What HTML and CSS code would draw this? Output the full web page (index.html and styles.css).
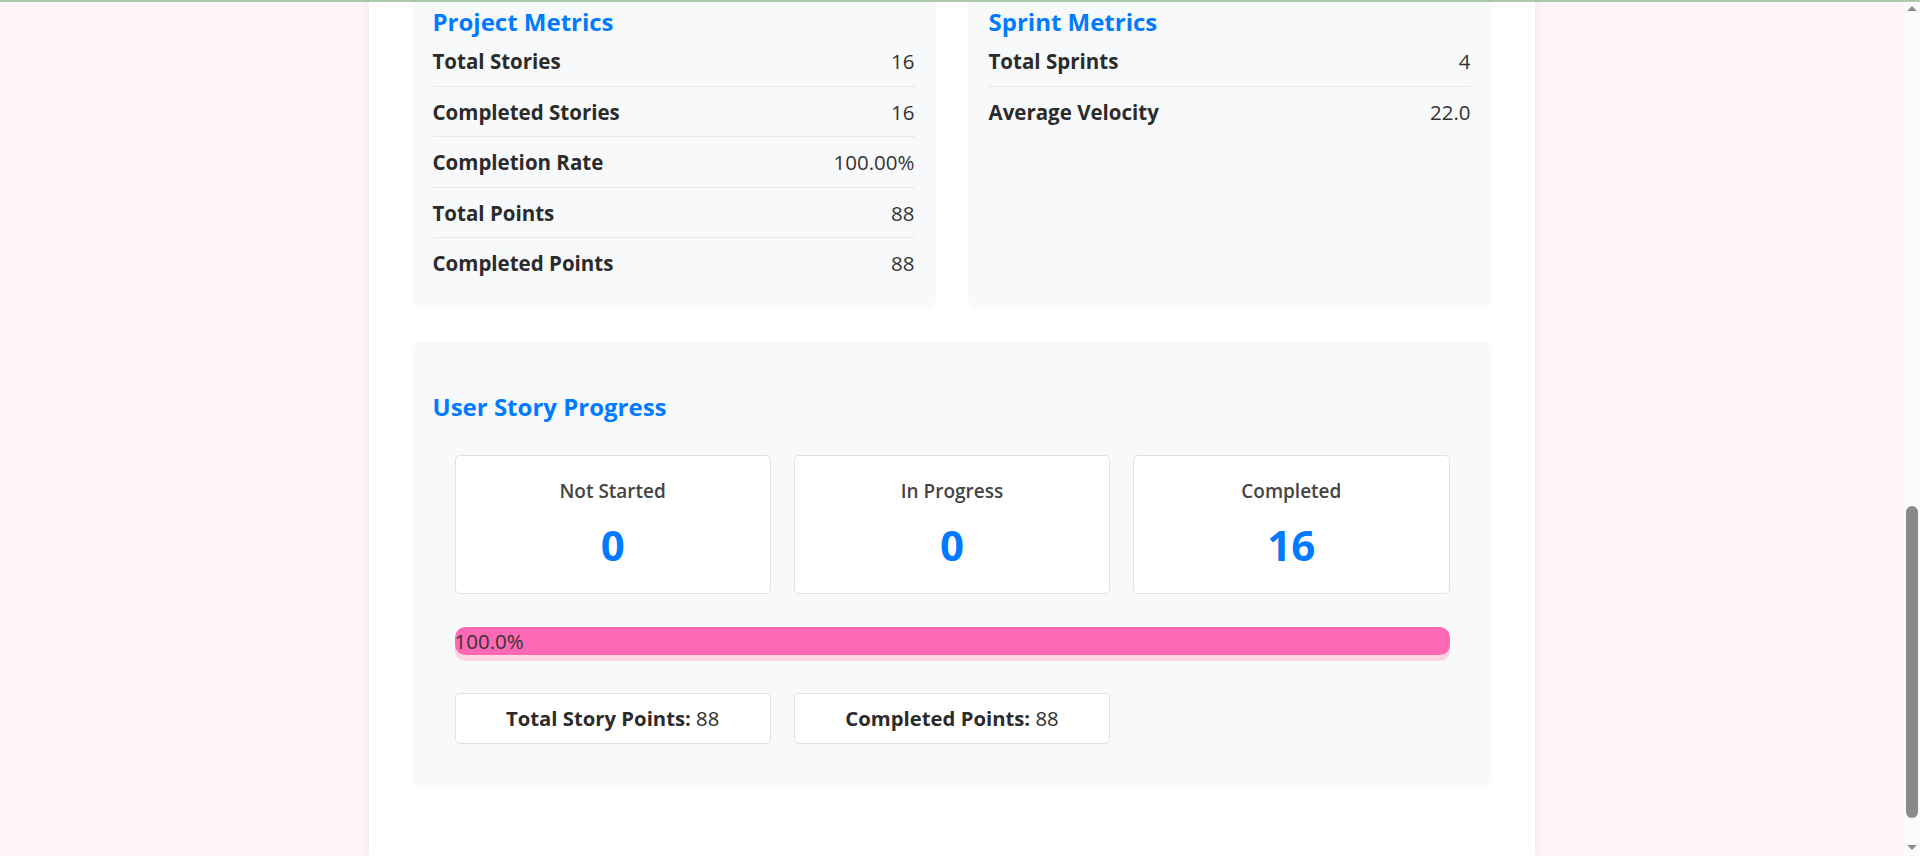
FILE: index.html
```html
<!DOCTYPE html>
<html lang="en">
<head>
<meta charset="utf-8">
<title>Project Dashboard</title>
<link rel="stylesheet" href="styles.css">
</head>
<body>
<div class="top-line"></div>
<div class="page">
  <div class="metrics-grid">
    <div class="card">
      <h3 class="card-title">Project Metrics</h3>
      <div class="row"><span class="label">Total Stories</span><span class="value">16</span></div>
      <div class="row"><span class="label">Completed Stories</span><span class="value">16</span></div>
      <div class="row"><span class="label">Completion Rate</span><span class="value">100.00%</span></div>
      <div class="row"><span class="label">Total Points</span><span class="value">88</span></div>
      <div class="row"><span class="label">Completed Points</span><span class="value">88</span></div>
    </div>
    <div class="card">
      <h3 class="card-title">Sprint Metrics</h3>
      <div class="row"><span class="label">Total Sprints</span><span class="value">4</span></div>
      <div class="row"><span class="label">Average Velocity</span><span class="value">22.0</span></div>
    </div>
  </div>

  <section class="progress-section">
    <h3 class="section-title">User Story Progress</h3>
    <div class="stat-grid">
      <div class="stat-box"><div class="stat-label">Not Started</div><div class="stat-number">0</div></div>
      <div class="stat-box"><div class="stat-label">In Progress</div><div class="stat-number">0</div></div>
      <div class="stat-box"><div class="stat-label">Completed</div><div class="stat-number">16</div></div>
    </div>
    <div class="progress">
      <div class="progress-fill" style="width: 100%">100.0%</div>
    </div>
    <div class="points-grid">
      <div class="points-box"><strong>Total Story Points:</strong> 88</div>
      <div class="points-box"><strong>Completed Points:</strong> 88</div>
    </div>
  </section>
</div>
<div class="scrollbar" aria-hidden="true">
  <div class="sb-button"><span class="sb-arrow-up"></span></div>
  <div class="sb-track"><div class="sb-thumb"></div></div>
  <div class="sb-button"><span class="sb-arrow-down"></span></div>
</div>
</body>
</html>
```
FILE: styles.css
```css
html {
  background: #fff4f7;
}
body {
  margin: 0;
  padding-right: 17px;
  background: #fff4f7;
  font-family: "Open Sans", "Noto Sans", sans-serif;
  color: #333;
  overflow: hidden;
}
.top-line {
  position: fixed;
  top: 0;
  left: 0;
  right: 0;
  height: 2px;
  background: #a9c9a9;
  z-index: 10;
}
.scrollbar {
  position: fixed;
  top: 0;
  right: 0;
  bottom: 0;
  width: 17px;
  background: #fbfbfb;
  display: flex;
  flex-direction: column;
  align-items: center;
}
.sb-button {
  height: 17px;
  width: 17px;
  display: flex;
  align-items: center;
  justify-content: center;
}
.sb-arrow-up {
  width: 0;
  height: 0;
  border-left: 5px solid transparent;
  border-right: 5px solid transparent;
  border-bottom: 5px solid #8a8a8a;
}
.sb-arrow-down {
  width: 0;
  height: 0;
  border-left: 5px solid transparent;
  border-right: 5px solid transparent;
  border-top: 5px solid #8a8a8a;
}
.sb-track {
  flex: 1;
  width: 17px;
  display: flex;
  flex-direction: column;
  align-items: center;
}
.sb-thumb {
  margin-top: 489px;
  width: 12px;
  height: 312px;
  border-radius: 6px;
  background: #8a8a8a;
}
.page {
  width: 1080px;
  margin: 0 auto;
  padding: 0 43px 70px;
  background: #fff;
  box-shadow: 0 0 8px rgba(160, 100, 120, 0.12);
}
.metrics-grid {
  display: grid;
  grid-template-columns: 1fr 1fr;
  gap: 32px;
}
.card {
  background: #f8f9fa;
  border-radius: 0 0 8px 8px;
  padding: 7px 21px 20px;
}
.card-title,
.section-title {
  margin: 0;
  font-size: 24px;
  line-height: 29px;
  font-weight: 700;
  color: #007bff;
}
.row {
  display: flex;
  justify-content: space-between;
  align-items: center;
  padding: 11px 0 10.6px;
  font-size: 20.5px;
  line-height: 28px;
  border-bottom: 1px solid #e6e8eb;
}
.row:last-child {
  border-bottom: none;
}
.label {
  font-weight: 700;
  color: #2b2b2b;
}
.value {
  color: #333;
}
.progress-section {
  margin-top: 34px;
  background: #f8f9fa;
  border-radius: 8px;
  padding: 50px 20px 20px 21px;
}
.stat-grid {
  display: grid;
  grid-template-columns: repeat(3, 1fr);
  gap: 23px;
  margin: 34px 22px 0;
}
.stat-box {
  background: #fff;
  border: 1px solid #dee2e6;
  border-radius: 5px;
  padding: 21px 16px 23px;
  text-align: center;
}
.stat-label {
  font-size: 19px;
  line-height: 28px;
  font-weight: 600;
  color: #444;
}
.stat-number {
  margin-top: 15px;
  font-size: 42px;
  line-height: 50px;
  font-weight: 700;
  color: #007bff;
}
.progress {
  margin: 33px 22px 0;
  height: 34px;
  background: #fbd6e1;
  border-radius: 10px;
  overflow: hidden;
}
.progress-fill {
  height: 28px;
  line-height: 28px;
  background: #ff69b4;
  border-radius: 10px;
  font-size: 20.5px;
  color: #333;
  white-space: nowrap;
}
.points-grid {
  display: grid;
  grid-template-columns: repeat(3, 1fr);
  gap: 23px;
  margin: 32px 22px 23px;
}
.points-box {
  background: #fff;
  border: 1px solid #dee2e6;
  border-radius: 5px;
  padding: 10px 12px;
  font-size: 20.3px;
  line-height: 29px;
  text-align: center;
  color: #2b2b2b;
}
.points-box strong {
  font-weight: 700;
}
```
